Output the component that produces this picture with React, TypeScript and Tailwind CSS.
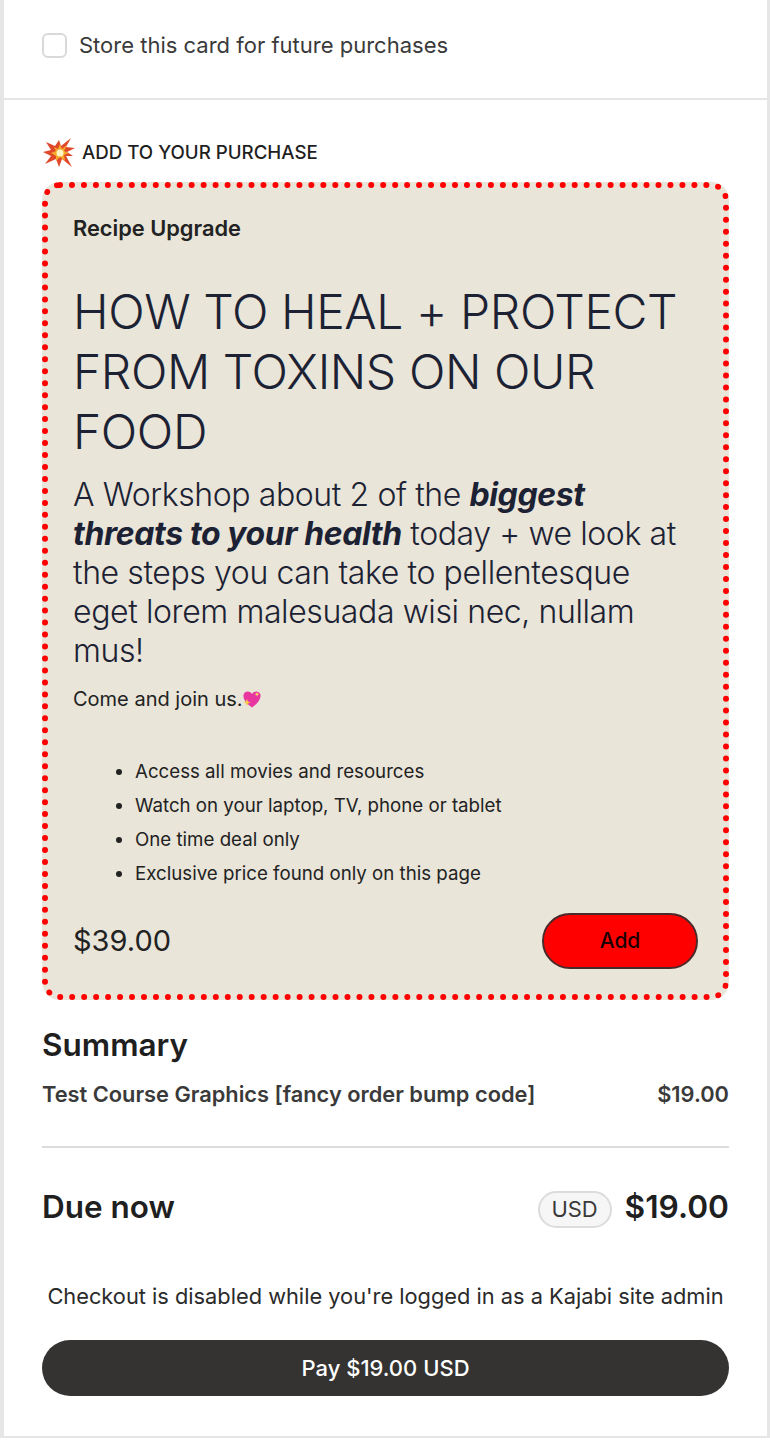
export default function App() {
  const items = [
    "Access all movies and resources",
    "Watch on your laptop, TV, phone or tablet",
    "One time deal only",
    "Exclusive price found only on this page",
  ];
  return (
    <div className="w-[770px] h-[1440px] bg-white overflow-hidden font-['Inter',sans-serif] text-[#1f1f1f]">
      <div className="h-[1438px] border-l-[4px] border-r-[3px] border-b-2 border-[#e6e6e6]">
        <div className="h-[100px] border-b-2 border-[#e6e6e6] flex items-center gap-[12px] pl-[38px] pb-[8px]">
          <div className="w-[25px] h-[25px] rounded-md border-2 border-[#d9d9d9] bg-white" />
          <span className="text-[22px] leading-7 text-[#3a3a3a]">Store this card for future purchases</span>
        </div>
        <div className="pl-[38px] pr-[38px] pt-[37px]">
          <div className="flex items-center gap-[6px] h-[32px]">
            <svg width="34" height="32" viewBox="0 0 34 32" className="shrink-0">
              <polygon points="17,3 19,9 29,1 24,10 33,11 25,15 31,19 24,19 30,30 20,22 17,30 14,22 3,27 9,19 1,15 9,13 4,5 13,9" fill="#e0482a" />
              <polygon points="18,7 20,12 25,8 22,14 27,16 22,18 23,24 18,20 14,24 14,19 9,16 14,14 12,10 16,12" fill="#f7a92c" />
              <circle cx="18" cy="16" r="3.5" fill="#fff6c4" />
            </svg>
            <span className="text-[18.7px] font-medium leading-6 text-[#1f1f1f]">ADD TO YOUR PURCHASE</span>
          </div>
          <div className="mt-[13px] h-[818px] rounded-[18px] border-[6px] border-dotted border-[#ff0000] bg-[#e9e5d9] pl-[25px] pr-[25px] pt-[26px] flex flex-col">
            <div className="text-[21.8px] font-semibold leading-[28px] text-[#222]">Recipe Upgrade</div>
            <h2 className="mt-[40px] text-[48px] font-light leading-[60px] tracking-[-0.4px] text-[#1c2233]">HOW TO HEAL + PROTECT FROM TOXINS ON OUR FOOD</h2>
            <p className="mt-[13px] text-[32px] font-light leading-[39px] tracking-[-0.4px] text-[#1c2233]">
              A Workshop about 2 of the <strong className="font-bold italic">biggest threats to your health</strong> today + we look at the steps you can take to pellentesque eget lorem malesuada wisi nec, nullam mus!
            </p>
            <div className="mt-[15px] flex items-center text-[20px] leading-7 text-[#222]">
              <span>Come and join us.</span>
              <svg width="20" height="20" viewBox="0 0 20 20" className="shrink-0 -ml-[1px]">
                <path d="M10 18.5 C4 14.5 1 10 1.5 6 C2 2.5 7 1 10 5 C13 1 18 2.5 18.5 6 C19 10 16 14.5 10 18.5Z" fill="#e8359f" />
                <path d="M5 10 l1 2.5 2.5 1 -2.5 1 -1 2.5 -1 -2.5 -2.5 -1 2.5 -1Z" fill="#f7c948" />
                <path d="M15 3 l.7 1.6 1.6.7 -1.6.7 -.7 1.6 -.7 -1.6 -1.6 -.7 1.6 -.7Z" fill="#f7d96b" />
              </svg>
            </div>
            <ul className="mt-[42px] list-disc pl-[62px] text-[18.7px] leading-[34px] text-[#222]">
              {items.map((t) => (
                <li key={t}>{t}</li>
              ))}
            </ul>
            <div className="mt-[22px] flex items-center justify-between">
              <span className="text-[29px] leading-9 text-[#222]">$39.00</span>
              <button className="w-[156px] h-[56px] rounded-full border-2 border-[#4a2a2a] bg-[#ff0000] text-[21px] font-medium text-[#1a0000]">Add</button>
            </div>
          </div>
          <h3 className="mt-[25px] text-[31.5px] font-semibold leading-10 text-[#1f1f1f]">Summary</h3>
          <div className="mt-[15px] flex justify-between text-[21.8px] font-semibold leading-7 text-[#3a3a3a]">
            <span>Test Course Graphics [fancy order bump code]</span>
            <span>$19.00</span>
          </div>
          <div className="mt-[38px] border-t-2 border-[#dcdcdc]" />
          <div className="mt-[37px] flex items-center justify-between">
            <span className="text-[31.5px] font-semibold leading-10">Due now</span>
            <div className="flex items-center gap-[13px]">
              <span className="h-[37px] w-[74px] rounded-full border-2 border-[#dcdcdc] bg-[#f6f6f6] flex items-center justify-center text-[22px] text-[#3a3a3a] mt-[6px]">USD</span>
              <span className="text-[31.7px] font-semibold leading-10">$19.00</span>
            </div>
          </div>
          <p className="mt-[54px] text-center text-[21.8px] leading-7 text-[#2a2a2a] whitespace-nowrap">Checkout is disabled while you're logged in as a Kajabi site admin</p>
          <button className="mt-[30px] w-full h-[56px] rounded-full bg-[#343331] text-white text-[22px] font-medium">Pay $19.00 USD</button>
        </div>
      </div>
    </div>
  );
}
